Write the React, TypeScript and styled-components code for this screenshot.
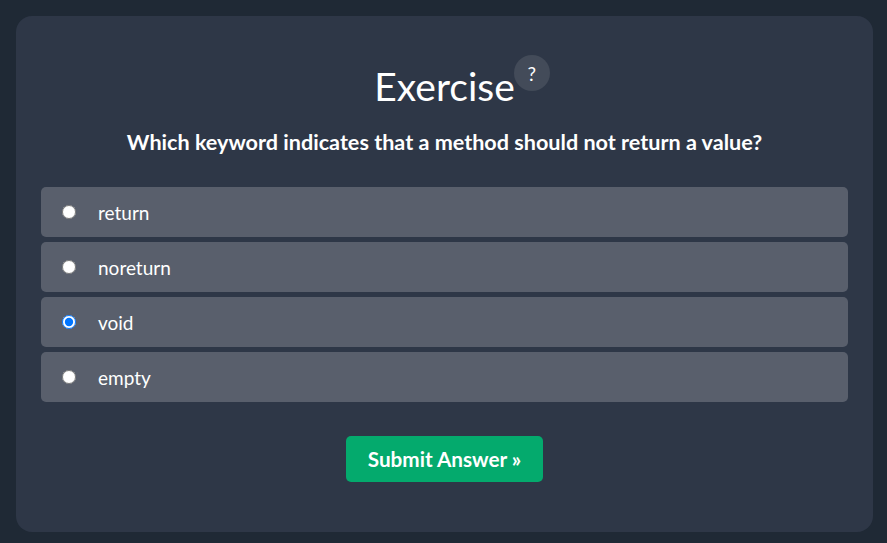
import React, { FC, useState } from "react";
import styled, { createGlobalStyle } from "styled-components";

const GlobalStyle = createGlobalStyle`
  html, body {
    margin: 0;
    background: #1f2935;
  }
  body {
    font-family: "Source Sans Pro", "Lato", "Open Sans", sans-serif;
  }
`;

const Page = styled.div`
  padding: 16px 14px 11px 16px;
  min-height: 100vh;
  box-sizing: border-box;
`;

const Card = styled.div`
  background: #2e3747;
  border-radius: 16px;
  padding: 38px 25px 50px;
  display: flex;
  flex-direction: column;
  align-items: center;
`;

const TitleRow = styled.div`
  position: relative;
  margin-top: 8px;
`;

const Title = styled.h2`
  margin: 0;
  font-size: 39px;
  font-weight: 400;
  line-height: 48px;
  color: #ffffff;
`;

const HelpBadge = styled.span`
  position: absolute;
  left: 100%;
  top: -7px;
  margin-left: -1px;
  width: 36px;
  height: 36px;
  border-radius: 50%;
  background: #434b59;
  color: #ffffff;
  font-size: 19px;
  display: flex;
  align-items: center;
  justify-content: center;
`;

const Question = styled.p`
  margin: 19px 0 32px;
  font-size: 21.6px;
  font-weight: 700;
  color: #ffffff;
`;

const Options = styled.div`
  align-self: stretch;
  display: flex;
  flex-direction: column;
  gap: 5px;
`;

const Option = styled.label`
  display: flex;
  align-items: center;
  height: 50px;
  padding: 0 21px;
  background: #595f6c;
  border-radius: 5px;
  color: #ffffff;
  font-size: 19px;
  cursor: pointer;
`;

const Radio = styled.input`
  margin: 0 22px 0 0;
  width: 14px;
  height: 14px;
`;

const SubmitButton = styled.button`
  margin-top: 34px;
  background: #04aa6d;
  color: #ffffff;
  border: none;
  border-radius: 5px;
  padding: 0 22px;
  height: 46px;
  font-family: inherit;
  font-size: 20.7px;
  font-weight: 700;
  cursor: pointer;
`;

const choices = ["return", "noreturn", "void", "empty"];

const App: FC = () => {
  const [picked, setPicked] = useState("void");
  return (
    <>
      <GlobalStyle />
      <Page>
        <Card>
          <TitleRow>
            <Title>Exercise</Title>
            <HelpBadge>?</HelpBadge>
          </TitleRow>
          <Question>
            Which keyword indicates that a method should not return a value?
          </Question>
          <Options>
            {choices.map((c) => (
              <Option key={c}>
                <Radio
                  type="radio"
                  name="quiz"
                  checked={picked === c}
                  onChange={() => setPicked(c)}
                />
                {c}
              </Option>
            ))}
          </Options>
          <SubmitButton>Submit Answer »</SubmitButton>
        </Card>
      </Page>
    </>
  );
};

export default App;
